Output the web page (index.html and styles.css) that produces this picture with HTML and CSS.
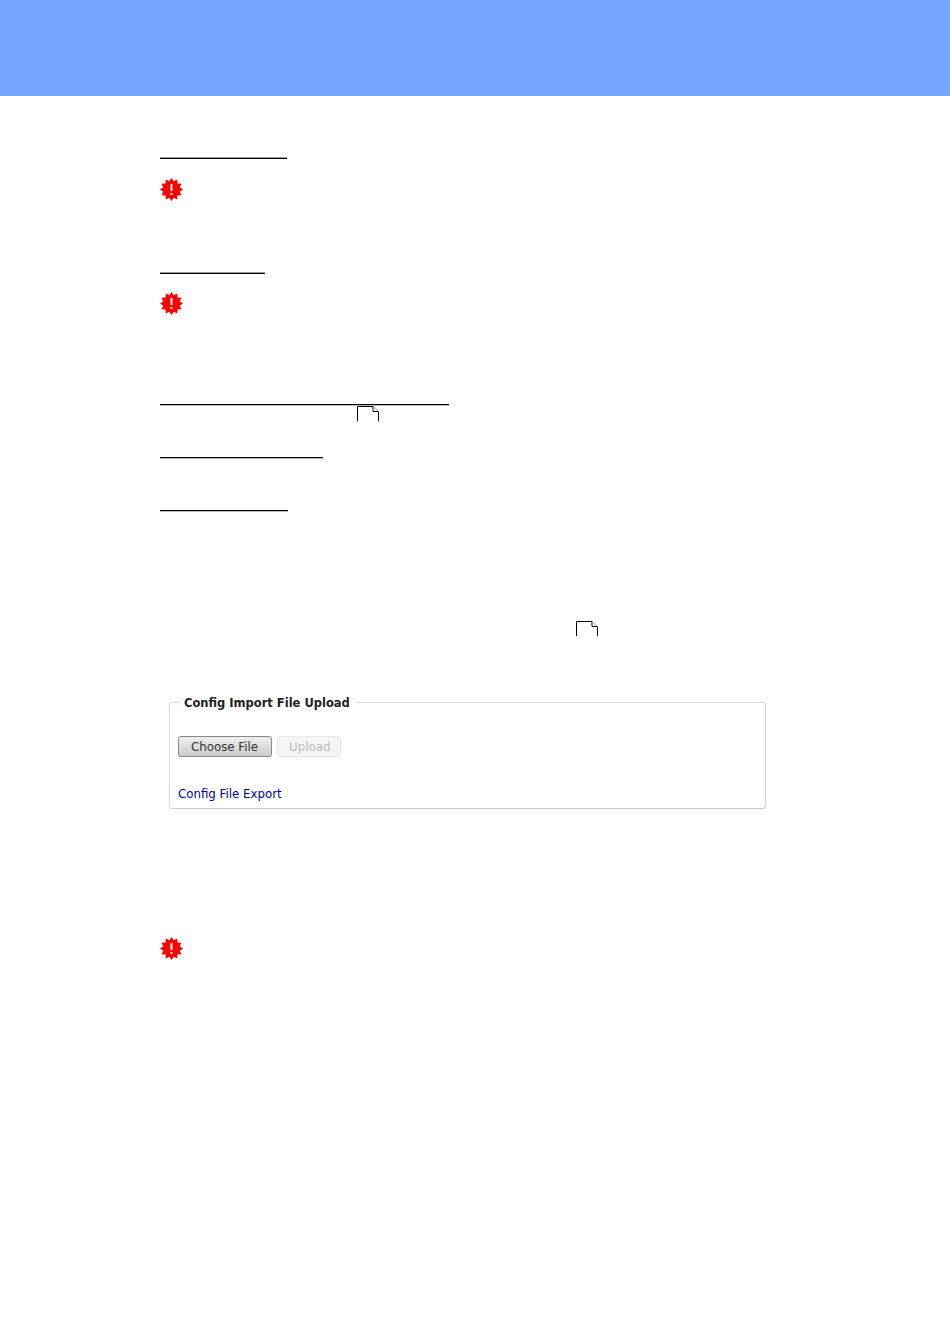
FILE: index.html
```html
<!DOCTYPE html>
<html>

<head>
    <title>Config Import</title>
    <link rel="stylesheet" href="styles.css">
</head>

<body>
    <svg width="0" height="0" class="defs">
        <defs>
            <g id="warn">
                <polygon fill="#f00" points="11.5,0 13.7,3.3 17.2,1.5 17.5,5.5 21.5,5.8 19.7,9.3 23,11.5 19.7,13.7 21.5,17.2 17.5,17.5 17.2,21.5 13.7,19.7 11.5,23 9.3,19.7 5.8,21.5 5.5,17.5 1.5,17.2 3.3,13.7 0,11.5 3.3,9.3 1.5,5.8 5.5,5.5 5.8,1.5 9.3,3.3" />
                <rect fill="#fff" x="10.5" y="6" width="2" height="7" />
                <rect fill="#fff" x="10.5" y="15" width="2" height="2" />
            </g>
        </defs>
    </svg>

    <div class="banner"></div>

    <div class="content">
        <div class="rule rule-first"></div>
        <svg class="warn warn-first" width="23" height="23"><use href="#warn" /></svg>

        <div class="rule rule-second"></div>
        <svg class="warn warn-second" width="23" height="23"><use href="#warn" /></svg>

        <div class="rule rule-third"></div>
        <svg class="page page-first" width="22" height="15" viewBox="0 0 22 15">
            <path class="page-line" d="M.5 15V.5h15.5v5h5.5V15" />
            <path class="page-fold" d="M16 .5l5.5 5" />
        </svg>

        <div class="rule rule-fourth"></div>
        <div class="rule rule-fifth"></div>

        <svg class="page page-second" width="22" height="15" viewBox="0 0 22 15">
            <path class="page-line" d="M.5 15V.5h15.5v5h5.5V15" />
            <path class="page-fold" d="M16 .5l5.5 5" />
        </svg>

        <fieldset class="upload-box">
            <legend>Config Import File Upload</legend>
            <div class="upload-row">
                <button class="btn">Choose File</button>
                <button class="btn btn-disabled" disabled>Upload</button>
            </div>
            <a class="export-link" href="#">Config File Export</a>
        </fieldset>

        <svg class="warn warn-last" width="23" height="23"><use href="#warn" /></svg>
    </div>
</body>

</html>
```

FILE: styles.css
```css
body {
    font-family: "DejaVu Sans", Verdana, sans-serif;
    font-size: 11.8px;
    margin: 0;
    background-color: #fff;
}

.defs {
    display: block;
    height: 0;
}

.banner {
    height: 96px;
    background-color: #74a5ff;
}

.content {
    padding-left: 160px;
}

.rule {
    height: 1px;
    background-color: #000;
    border-bottom: 1px solid #bbb;
}

.rule-first {
    width: 127px;
    margin-top: 61px;
    border-top: 1px solid #999;
    border-bottom: 0;
}

.rule-second {
    width: 105px;
    margin-top: 71px;
    border-top: 1px solid #999;
    border-bottom: 0;
}

.rule-third {
    width: 289px;
    margin-top: 89px;
}

.rule-fourth {
    width: 163px;
    margin-top: 36px;
}

.rule-fifth {
    width: 128px;
    margin-top: 51px;
}

.warn {
    display: block;
}

.warn-first {
    margin-top: 19px;
}

.warn-second {
    margin-top: 18px;
}

.warn-last {
    margin-top: 128px;
}

.page {
    display: block;
}

.page-line {
    fill: none;
    stroke: #000;
}

.page-fold {
    fill: none;
    stroke: #aaa;
}

.page-first {
    margin: 0 0 0 197px;
}

.page-second {
    margin: 109px 0 0 416px;
}

.upload-box {
    width: 597px;
    height: 115px;
    box-sizing: border-box;
    margin: 58px 0 0 9px;
    padding: 0 8px;
    border: 1px solid #ddd;
    border-right-color: #ccc;
    border-bottom-color: #ccc;
    border-radius: 3px;
}

.upload-box legend {
    margin-left: 2px;
    padding: 2px 5px 0 4px;
    font-size: 11.5px;
    font-weight: bold;
    color: #222;
}

.upload-row {
    display: flex;
    gap: 5px;
    margin-top: 26px;
}

.btn {
    height: 21px;
    padding: 0 13px 0 12px;
    font-family: inherit;
    font-size: 11.8px;
    color: #333;
    background: linear-gradient(#eee, #ccc);
    border: 1px solid #888;
    border-radius: 3px;
}

.btn-disabled {
    padding: 0 10px 0 11px;
    color: #bbb;
    background: #f5f5f5;
    border-color: #e8e8e8;
}

.export-link {
    display: block;
    margin-top: 30px;
    color: #00a;
    text-decoration: none;
}
```
